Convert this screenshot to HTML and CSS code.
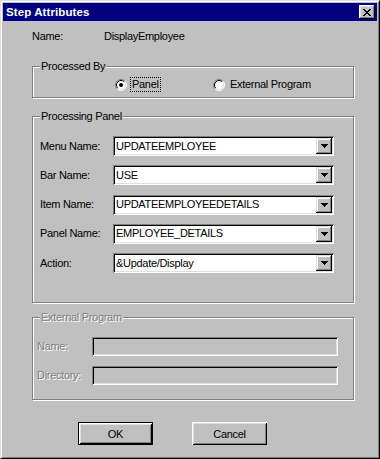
FILE: index.html
```html
<!DOCTYPE html>
<html lang="en">
<head>
  <meta charset="UTF-8" />
  <title>Step Attributes</title>
  <link rel="stylesheet" href="styles.css">
</head>
<body>

  <div class="window">
    <!-- Title bar -->
    <div class="title-bar">
      <span class="title">Step Attributes</span>
      <button class="close-btn" aria-label="Close">
        <svg width="8" height="7" viewBox="0 0 8 7" shape-rendering="crispEdges">
          <path fill="#000" d="M0 0h2v1H0zM6 0h2v1H6zM1 1h2v1H1zM5 1h2v1H5zM2 2h4v1H2zM3 3h2v1H3zM2 4h4v1H2zM1 5h2v1H1zM5 5h2v1H5zM0 6h2v1H0zM6 6h2v1H6z"/>
        </svg>
      </button>
    </div>

    <div class="dialog-body">
      <div class="name-row">
        <span class="name-label">Name:</span>
        <span>DisplayEmployee</span>
      </div>

      <!-- Processed By -->
      <fieldset class="group processed-by">
        <legend>Processed By</legend>
        <div class="radio-row">
          <label class="radio-item">
            <svg class="radio" width="12" height="12" viewBox="0 0 12 12">
              <circle cx="6" cy="6" r="5" fill="#fff"/>
              <path d="M2.11 9.89A5.5 5.5 0 0 1 9.89 2.11" fill="none" stroke="#808080"/>
              <path d="M9.89 2.11A5.5 5.5 0 0 1 2.11 9.89" fill="none" stroke="#fff"/>
              <path d="M2.82 9.18A4.5 4.5 0 0 1 9.18 2.82" fill="none" stroke="#000"/>
              <path d="M9.18 2.82A4.5 4.5 0 0 1 2.82 9.18" fill="none" stroke="#dfdfdf"/>
              <circle cx="6" cy="6" r="2" fill="#000"/>
            </svg>
            <span class="radio-text focused">Panel</span>
          </label>
          <label class="radio-item">
            <svg class="radio" width="12" height="12" viewBox="0 0 12 12">
              <circle cx="6" cy="6" r="5" fill="#fff"/>
              <path d="M2.11 9.89A5.5 5.5 0 0 1 9.89 2.11" fill="none" stroke="#808080"/>
              <path d="M9.89 2.11A5.5 5.5 0 0 1 2.11 9.89" fill="none" stroke="#fff"/>
              <path d="M2.82 9.18A4.5 4.5 0 0 1 9.18 2.82" fill="none" stroke="#000"/>
              <path d="M9.18 2.82A4.5 4.5 0 0 1 2.82 9.18" fill="none" stroke="#dfdfdf"/>
            </svg>
            <span class="radio-text">External Program</span>
          </label>
        </div>
      </fieldset>

      <!-- Processing Panel -->
      <fieldset class="group processing-panel">
        <legend>Processing Panel</legend>
        <div class="fields">
          <div class="field-row">
            <span class="field-label">Menu Name:</span>
            <div class="combo">
              <span class="combo-value">UPDATEEMPLOYEE</span>
              <span class="combo-btn"><svg width="7" height="4" viewBox="0 0 7 4" shape-rendering="crispEdges"><path fill="#000" d="M0 0h7v1H0zM1 1h5v1H1zM2 2h3v1H2zM3 3h1v1H3z"/></svg></span>
            </div>
          </div>
          <div class="field-row">
            <span class="field-label">Bar Name:</span>
            <div class="combo">
              <span class="combo-value">USE</span>
              <span class="combo-btn"><svg width="7" height="4" viewBox="0 0 7 4" shape-rendering="crispEdges"><path fill="#000" d="M0 0h7v1H0zM1 1h5v1H1zM2 2h3v1H2zM3 3h1v1H3z"/></svg></span>
            </div>
          </div>
          <div class="field-row">
            <span class="field-label">Item Name:</span>
            <div class="combo">
              <span class="combo-value">UPDATEEMPLOYEEDETAILS</span>
              <span class="combo-btn"><svg width="7" height="4" viewBox="0 0 7 4" shape-rendering="crispEdges"><path fill="#000" d="M0 0h7v1H0zM1 1h5v1H1zM2 2h3v1H2zM3 3h1v1H3z"/></svg></span>
            </div>
          </div>
          <div class="field-row">
            <span class="field-label">Panel Name:</span>
            <div class="combo">
              <span class="combo-value">EMPLOYEE_DETAILS</span>
              <span class="combo-btn"><svg width="7" height="4" viewBox="0 0 7 4" shape-rendering="crispEdges"><path fill="#000" d="M0 0h7v1H0zM1 1h5v1H1zM2 2h3v1H2zM3 3h1v1H3z"/></svg></span>
            </div>
          </div>
          <div class="field-row">
            <span class="field-label">Action:</span>
            <div class="combo">
              <span class="combo-value">&amp;Update/Display</span>
              <span class="combo-btn"><svg width="7" height="4" viewBox="0 0 7 4" shape-rendering="crispEdges"><path fill="#000" d="M0 0h7v1H0zM1 1h5v1H1zM2 2h3v1H2zM3 3h1v1H3z"/></svg></span>
            </div>
          </div>
        </div>
      </fieldset>

      <!-- External Program (disabled) -->
      <fieldset class="group external-program disabled">
        <legend>External Program</legend>
        <div class="ext-fields">
          <div class="field-row">
            <span class="ext-label">Name:</span>
            <div class="edit-disabled"></div>
          </div>
          <div class="field-row">
            <span class="ext-label">Directory:</span>
            <div class="edit-disabled"></div>
          </div>
        </div>
      </fieldset>

      <div class="button-row">
        <button class="btn default">OK</button>
        <button class="btn">Cancel</button>
      </div>
    </div>
  </div>

</body>
</html>
```

FILE: styles.css
```css
* {
  box-sizing: border-box;
}

body {
  margin: 0;
  font-family: "Liberation Sans", Arial, sans-serif;
  font-size: 11px;
  letter-spacing: -0.3px;
  line-height: 13px;
  color: #000;
  background: #c0c0c0;
}

/* Window frame */
.window {
  width: 380px;
  height: 459px;
  background: #c0c0c0;
  border: 1px solid;
  border-color: #dfdfdf #000 #000 #dfdfdf;
  box-shadow: inset 1px 1px 0 #fff, inset -1px -1px 0 #808080;
  padding: 2px;
  display: flex;
  flex-direction: column;
}

.title-bar {
  height: 18px;
  background: #000080;
  color: #fff;
  display: flex;
  align-items: center;
  justify-content: space-between;
  padding: 0 2px 0 3px;
}

.title {
  font-weight: bold;
  font-size: 11.5px;
  letter-spacing: 0.1px;
}

.close-btn {
  width: 16px;
  height: 14px;
  padding: 0;
  border: none;
  background: #c0c0c0;
  box-shadow: inset -1px -1px 0 #000, inset 1px 1px 0 #fff, inset -2px -2px 0 #808080, inset 2px 2px 0 #dfdfdf;
  display: flex;
  align-items: center;
  justify-content: center;
}

.dialog-body {
  display: flex;
  flex-direction: column;
  padding-left: 29px;
}

.name-row {
  display: flex;
  margin-top: 9px;
}

.name-label {
  width: 72px;
}

/* Group boxes */
.group {
  width: 322px;
  min-width: 0;
  margin: 0;
  padding: 0;
  border: 1px solid #808080;
  box-shadow: 1px 1px 0 #fff, inset 1px 1px 0 #fff;
}

.group legend {
  margin-left: 7px;
  padding: 0 1px;
  height: 13px;
  background: #c0c0c0;
}

.processed-by {
  margin-top: 17px;
}

.radio-row {
  display: flex;
  align-items: center;
  height: 15px;
  margin: 4px 0 5px 82px;
}

.radio-item {
  display: flex;
  align-items: center;
  gap: 3px;
  width: 98px;
}

.radio {
  display: block;
  flex: none;
}

.radio-text {
  padding: 0 1px;
  border: 1px dotted transparent;
  white-space: nowrap;
}

.radio-text.focused {
  border-color: #000;
}

.processing-panel {
  margin-top: 12px;
}

.fields {
  display: flex;
  flex-direction: column;
  gap: 9.25px;
  padding: 13px 0 29px 7px;
}

.field-row {
  display: flex;
  align-items: center;
}

.field-label {
  width: 73px;
}

/* Drop-down combo */
.combo {
  width: 221px;
  height: 20px;
  padding: 2px;
  background: #fff;
  box-shadow: inset 1px 1px 0 #808080, inset -1px -1px 0 #fff, inset 2px 2px 0 #000, inset -2px -2px 0 #dfdfdf;
  display: flex;
  align-items: center;
}

.combo-value {
  flex: 1;
  padding-left: 1px;
  white-space: nowrap;
}

.combo-btn {
  width: 16px;
  height: 16px;
  background: #c0c0c0;
  box-shadow: inset -1px -1px 0 #000, inset 1px 1px 0 #dfdfdf, inset -2px -2px 0 #808080, inset 2px 2px 0 #fff;
  display: flex;
  align-items: center;
  justify-content: center;
}

/* Disabled group */
.external-program {
  margin-top: 8px;
}

.disabled,
.disabled legend {
  color: #808080;
  text-shadow: 1px 1px 0 #fff;
}

.ext-fields {
  display: flex;
  flex-direction: column;
  gap: 10px;
  padding: 13px 0 14px 4px;
}

.ext-label {
  width: 55px;
}

.edit-disabled {
  width: 246px;
  height: 19px;
  background: #c0c0c0;
  box-shadow: inset 1px 1px 0 #808080, inset -1px -1px 0 #fff, inset 2px 2px 0 #000, inset -2px -2px 0 #dfdfdf;
}

/* Buttons */
.button-row {
  display: flex;
  gap: 39px;
  margin: 22px 0 0 46px;
}

.btn {
  width: 75px;
  height: 23px;
  padding: 0;
  border: none;
  background: #c0c0c0;
  font-family: inherit;
  font-size: 11px;
  letter-spacing: -0.3px;
  color: #000;
  box-shadow: inset 1px 1px 0 #fff, inset -1px -1px 0 #000, inset 2px 2px 0 #dfdfdf, inset -2px -2px 0 #808080;
}

.btn.default {
  border: 1px solid #000;
}
```
